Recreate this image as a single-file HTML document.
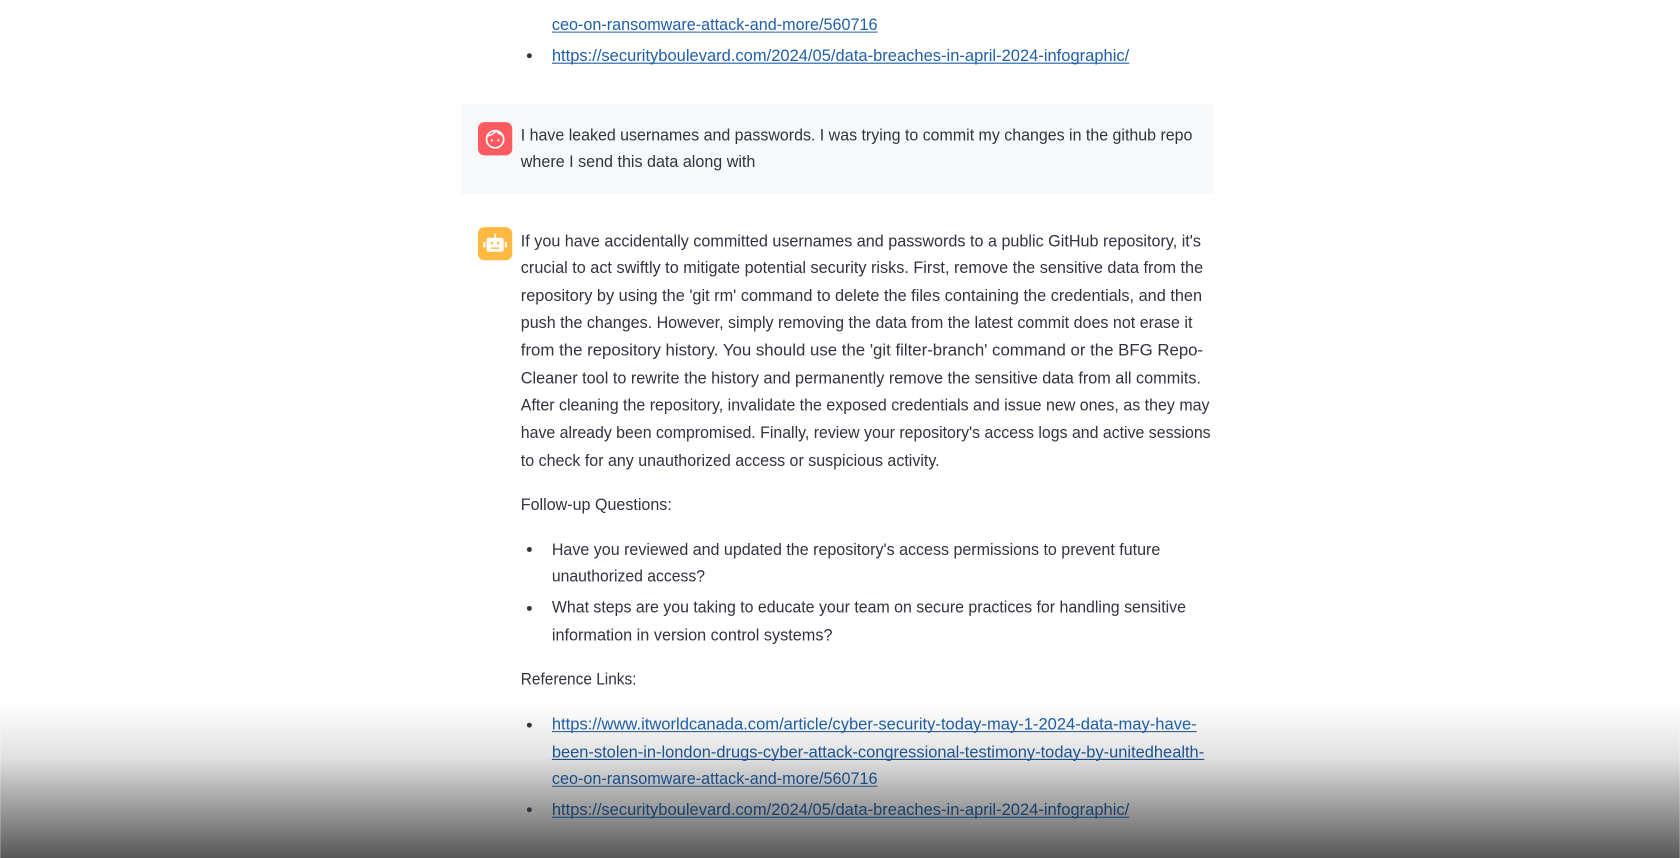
<!DOCTYPE html>
<html><head><meta charset="utf-8"><style>
html,body{margin:0;padding:0;background:#fff;overflow:hidden}
svg{display:block}
text{font-family:"Liberation Sans",sans-serif;font-size:15.5px;fill:#31333f}
.l{fill:#1f5fa8}
</style></head><body>
<svg width="1680" height="858" viewBox="0 0 1568 801" xmlns="http://www.w3.org/2000/svg">
<defs><linearGradient id="g" x1="0" y1="0" x2="0" y2="1">
<stop offset="0" stop-color="#fff"/>
<stop offset="0.35" stop-color="#e2e2e2"/>
<stop offset="1" stop-color="#575757"/></linearGradient></defs>
<rect width="1568" height="801" fill="#fff"/>
<rect x="0" y="655" width="1568" height="146" fill="url(#g)"/>
<rect x="430" y="97" width="703" height="84" fill="#f7f8fa"/>
<g stroke="#1f5fa8" stroke-width="1">
<line x1="515" y1="30" x2="819" y2="30"/><line x1="515" y1="59" x2="1054" y2="59"/>
</g>
<g stroke="#1c4f8a" stroke-width="1">
<line x1="515" y1="683" x2="1117" y2="683"/><line x1="515" y1="709" x2="1124" y2="709"/>
<line x1="515" y1="734" x2="819" y2="734"/><line x1="515" y1="763" x2="1054" y2="763"/>
</g>
<g fill="#31333f"><circle cx="494" cy="52" r="2.3"/><circle cx="494" cy="513" r="2.3"/><circle cx="494" cy="568" r="2.3"/><circle cx="494" cy="677" r="2.3"/><circle cx="494" cy="756" r="2.3"/></g>
<text class="l" x="515" y="28" textLength="304" lengthAdjust="spacingAndGlyphs">ceo-on-ransomware-attack-and-more/560716</text>
<text class="l" x="515" y="57" textLength="539" lengthAdjust="spacingAndGlyphs">https://securityboulevard.com/2024/05/data-breaches-in-april-2024-infographic/</text>
<rect x="446" y="114" width="32" height="31" rx="6" fill="#ff5a5f"/>
<circle cx="462" cy="130" r="8" fill="none" stroke="#fff" stroke-width="1.6"/>
<path d="M455 127 q5 -1 8 -5 q2 3 6 4" fill="none" stroke="#fff" stroke-width="1.4"/>
<circle cx="459" cy="131" r="1" fill="#fff"/><circle cx="465" cy="131" r="1" fill="#fff"/>
<text x="486" y="131" textLength="627" lengthAdjust="spacingAndGlyphs">I have leaked usernames and passwords. I was trying to commit my changes in the github repo</text>
<text x="486" y="156" textLength="219" lengthAdjust="spacingAndGlyphs">where I send this data along with</text>
<rect x="446" y="212" width="32" height="31" rx="6" fill="#ffb840"/>
<rect x="454" y="222" width="16" height="13" rx="2" fill="#fff"/>
<line x1="462" y1="218" x2="462" y2="222" stroke="#fff" stroke-width="1.5"/>
<rect x="451" y="226" width="2" height="5" fill="#fff"/><rect x="471" y="226" width="2" height="5" fill="#fff"/>
<circle cx="459" cy="227" r="1.2" fill="#ffb840"/><circle cx="465" cy="227" r="1.2" fill="#ffb840"/>
<rect x="458" y="231" width="8" height="1.3" fill="#ffb840"/>
<text x="486" y="230" textLength="635" lengthAdjust="spacingAndGlyphs">If you have accidentally committed usernames and passwords to a public GitHub repository, it's</text>
<text x="486" y="255" textLength="637" lengthAdjust="spacingAndGlyphs">crucial to act swiftly to mitigate potential security risks. First, remove the sensitive data from the</text>
<text x="486" y="281" textLength="636" lengthAdjust="spacingAndGlyphs">repository by using the 'git rm' command to delete the files containing the credentials, and then</text>
<text x="486" y="306" textLength="627" lengthAdjust="spacingAndGlyphs">push the changes. However, simply removing the data from the latest commit does not erase it</text>
<text x="486" y="332" textLength="637" lengthAdjust="spacingAndGlyphs">from the repository history. You should use the 'git filter-branch' command or the BFG Repo-</text>
<text x="486" y="358" textLength="635" lengthAdjust="spacingAndGlyphs">Cleaner tool to rewrite the history and permanently remove the sensitive data from all commits.</text>
<text x="486" y="383" textLength="643" lengthAdjust="spacingAndGlyphs">After cleaning the repository, invalidate the exposed credentials and issue new ones, as they may</text>
<text x="486" y="409" textLength="644" lengthAdjust="spacingAndGlyphs">have already been compromised. Finally, review your repository's access logs and active sessions</text>
<text x="486" y="435" textLength="391" lengthAdjust="spacingAndGlyphs">to check for any unauthorized access or suspicious activity.</text>
<text x="486" y="476" textLength="141" lengthAdjust="spacingAndGlyphs">Follow-up Questions:</text>
<text x="515" y="518" textLength="568" lengthAdjust="spacingAndGlyphs">Have you reviewed and updated the repository's access permissions to prevent future</text>
<text x="515" y="543" textLength="143" lengthAdjust="spacingAndGlyphs">unauthorized access?</text>
<text x="515" y="572" textLength="592" lengthAdjust="spacingAndGlyphs">What steps are you taking to educate your team on secure practices for handling sensitive</text>
<text x="515" y="598" textLength="262" lengthAdjust="spacingAndGlyphs">information in version control systems?</text>
<text x="486" y="639" textLength="108" lengthAdjust="spacingAndGlyphs">Reference Links:</text>
<text class="l" x="515" y="681" textLength="602" lengthAdjust="spacingAndGlyphs" fill="#1f5a9e">https://www.itworldcanada.com/article/cyber-security-today-may-1-2024-data-may-have-</text>
<text class="l" x="515" y="707" textLength="609" lengthAdjust="spacingAndGlyphs" style="fill:#1d5494">been-stolen-in-london-drugs-cyber-attack-congressional-testimony-today-by-unitedhealth-</text>
<text class="l" x="515" y="732" textLength="304" lengthAdjust="spacingAndGlyphs" style="fill:#1b4e88">ceo-on-ransomware-attack-and-more/560716</text>
<text class="l" x="515" y="761" textLength="539" lengthAdjust="spacingAndGlyphs" style="fill:#18406e">https://securityboulevard.com/2024/05/data-breaches-in-april-2024-infographic/</text>
</svg>
</body></html>
